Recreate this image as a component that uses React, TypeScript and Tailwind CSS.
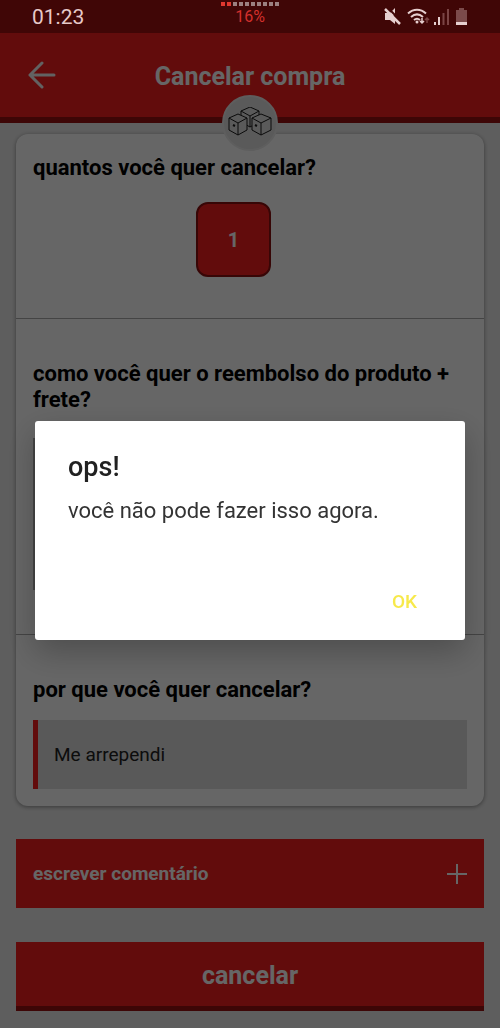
import React, { useState } from "react";

const StatusBar: React.FC = () => (
  <div className="relative flex h-[33px] items-center justify-between bg-[#400606] pl-8 pr-8">
    <time className="pt-[2px] text-[21px] text-[#e6c9c9]">01:23</time>
    <div className="absolute left-1/2 top-0 flex -translate-x-1/2 flex-col items-center pt-[2px]">
      <div className="flex gap-[2px]">
        {Array.from({ length: 10 }, (_, i) => (
          <span
            key={i}
            className={`h-1 w-1 ${i < 2 ? "bg-[#e0382f]" : "bg-[#9c8080]"}`}
          />
        ))}
      </div>
      <span className="mt-[2px] text-base leading-[18px] text-[#d3302c]">
        16%
      </span>
    </div>
    <svg width="84" height="18" viewBox="0 0 84 18" fill="none" aria-hidden="true">
      <path d="M1 5h5l5-5v6l-2 2 2 2v6l-5-4H1z" fill="#e6cfcf" />
      <path d="M3 -1l16 16" stroke="#400606" strokeWidth="2" />
      <path d="M1 1l15 15" stroke="#e6cfcf" strokeWidth="2.500" />
      <g stroke="#e6cfcf" strokeWidth="2">
        <path d="M24 5.500c5.500-5 12.500-5 18 0" />
        <path d="M27 9c4-3.500 8-3.500 12 0" />
        <path d="M30 12c2-1.700 4-1.700 6 0" />
      </g>
      <circle cx="33" cy="14" r="1.500" fill="#e6cfcf" />
      <path d="M38 10v5m-2-2l2 2 2-2" stroke="#e6cfcf" strokeWidth="1.500" />
      <path d="M43 15v-5m-2 2l2-2 2 2" stroke="#7b4444" strokeWidth="1.500" />
      <path d="M51 17v-3M55 17V9" stroke="#e6cfcf" strokeWidth="2" />
      <path d="M59.500 17V5M64 17V1" stroke="#7b4444" strokeWidth="2" />
      <path d="M75 0h5v2h3v12H72V2h3z" fill="#7b4a4a" />
      <path d="M72 14h11v3H72z" fill="#e6cfcf" />
    </svg>
  </div>
);

const BoxesIcon: React.FC = () => (
  <svg
    width="44"
    height="32"
    viewBox="0 0 44 32"
    fill="#e0e0e0"
    stroke="#1c1c1c"
    strokeLinejoin="round"
    aria-hidden="true"
  >
    <path d="M13 4l9-4 9 4v11l-9 5-9-5z" />
    <path d="M13 4l9 5 9-5M22 9v11" fill="none" />
    <path d="M1 11l9-4 9 4v12l-9 5-9-5z" />
    <path d="M1 11l9 5 9-5M10 16v12" fill="none" />
    <path d="M24 11l9-4 10 4v12l-10 5-9-5z" />
    <path d="M24 11l9 5 10-5M33 16v12" fill="none" />
    <path d="M5 18l2 1M27 18l2 1" strokeWidth="2" />
  </svg>
);

const Header: React.FC = () => (
  <header className="relative flex h-[90px] items-center justify-center border-b-[6px] border-[#990f0f] bg-[#f52020]">
    <button type="button" aria-label="Voltar" className="absolute left-7">
      <svg width="28" height="28" viewBox="0 0 28 28" fill="none" aria-hidden="true">
        <path
          d="M26 14H2M14 2L2 14l12 12"
          stroke="#f5f5f5"
          strokeWidth="3"
          strokeLinecap="round"
          strokeLinejoin="round"
        />
      </svg>
    </button>
    <h1 className="pt-1 text-[25px] font-bold text-white">Cancelar compra</h1>
    <div className="absolute left-1/2 top-[62px] flex h-14 w-14 -translate-x-1/2 items-center justify-center rounded-full border-2 border-[#ebebeb] bg-[#e0e0e0]">
      <BoxesIcon />
    </div>
  </header>
);

const Section: React.FC<{
  title: string;
  className?: string;
  children?: React.ReactNode;
}> = ({ title, className = "", children }) => (
  <section className={`px-[17px] ${className}`}>
    <h2 className="text-[22px] font-bold leading-[26px] text-black">{title}</h2>
    {children}
  </section>
);

const AlertDialog: React.FC<{
  title: string;
  message: string;
  onClose: () => void;
}> = ({ title, message, onClose }) => (
  <div className="fixed inset-x-0 bottom-0 top-[33px] flex items-center justify-center bg-black/60 px-[35px]">
    <div
      role="alertdialog"
      aria-labelledby="alert-title"
      aria-describedby="alert-message"
      className="w-full rounded-[3px] bg-white pb-[14px] pl-[33px] pr-[30px] pt-[30px] shadow-[0_12px_32px_rgba(0,0,0,0.25)]"
    >
      <h2 id="alert-title" className="text-[27px] font-medium leading-8 text-[#212121]">
        {title}
      </h2>
      <p id="alert-message" className="mt-[13px] text-[22px] leading-[30px] text-[#333333]">
        {message}
      </p>
      <div className="mt-[52px] flex justify-end">
        <button
          type="button"
          onClick={onClose}
          className="h-12 px-[18px] text-[19px] font-medium text-[#f7e94a]"
        >
          OK
        </button>
      </div>
    </div>
  </div>
);

export default function App() {
  const [open, setOpen] = useState(true);

  return (
    <div className="min-h-screen bg-[#ebebeb] font-[Roboto,sans-serif]">
      <StatusBar />
      <Header />

      <main className="px-4 pb-[17px] pt-[11px]">
        <div className="rounded-xl bg-white shadow-[0_1px_4px_rgba(0,0,0,0.4)]">
          <Section title="quantos você quer cancelar?" className="pb-[41px] pt-[21px]">
            <div className="mt-[21px] flex justify-center pr-[33px]">
              <button
                type="button"
                className="h-[75px] w-[75px] rounded-xl border-2 border-[#8a0f0f] bg-[#f52020] text-xl font-bold text-white"
              >
                1
              </button>
            </div>
          </Section>

          <Section
            title="como você quer o reembolso do produto + frete?"
            className="border-t border-[#aaaaaa] pb-11 pt-[42px]"
          >
            <div className="mt-[25px] h-[152px] border-l-2 border-[#aaaaaa]" />
          </Section>

          <Section
            title="por que você quer cancelar?"
            className="border-t border-[#aaaaaa] pb-[17px] pt-[42px]"
          >
            <button
              type="button"
              aria-pressed="true"
              className="mt-[17px] h-[69px] w-full border-l-[5px] border-[#f52020] bg-[#dedede] pl-4 pt-[2px] text-left text-[19px] text-[#222222]"
            >
              Me arrependi
            </button>
          </Section>
        </div>

        <button
          type="button"
          className="mt-[33px] flex h-[69px] w-full items-center justify-between bg-[#f52020] px-[17px] text-[19px] font-bold text-white"
        >
          <span className="pt-[2px]">escrever comentário</span>
          <svg width="20" height="20" viewBox="0 0 20 20" aria-hidden="true">
            <path d="M10 0v20M0 10h20" stroke="#ffffff" strokeWidth="2" />
          </svg>
        </button>

        <button
          type="button"
          className="mt-[34px] h-[69px] w-full border-b-[5px] border-[#990f0f] bg-[#f52020] pt-1 text-[25px] font-bold text-white"
        >
          cancelar
        </button>
      </main>

      {open && (
        <AlertDialog
          title="ops!"
          message="você não pode fazer isso agora."
          onClose={() => setOpen(false)}
        />
      )}
    </div>
  );
}
